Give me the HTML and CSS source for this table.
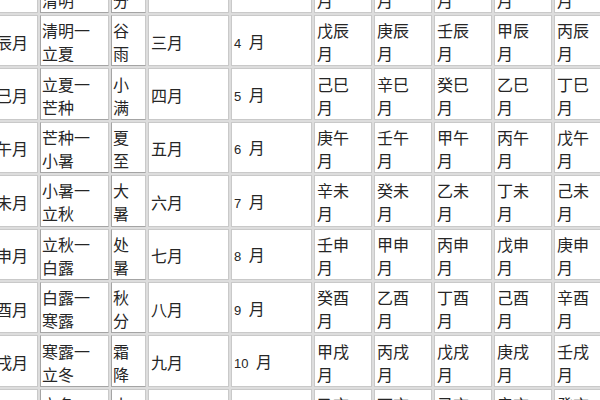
FILE: index.html
```html
<!DOCTYPE html>
<html lang="zh">
<head>
<meta charset="utf-8">
<title>月建表</title>
<link rel="stylesheet" href="styles.css">
</head>
<body>
<table class="grid">
<colgroup>
<col class="c1"><col class="c2"><col class="c3"><col class="c4"><col class="c5">
<col class="cg"><col class="cg"><col class="cg"><col class="cg"><col class="cg">
</colgroup>
<tbody>
<tr><td>卯月</td><td class="s">惊蛰一<br>清明</td><td class="s">春<br>分</td><td>二月</td><td><span class="n">3</span> 月</td><td>丁卯<br>月</td><td>己卯<br>月</td><td>辛卯<br>月</td><td>癸卯<br>月</td><td>乙卯<br>月</td></tr>
<tr><td>辰月</td><td class="s">清明一<br>立夏</td><td class="s">谷<br>雨</td><td>三月</td><td><span class="n">4</span> 月</td><td>戊辰<br>月</td><td>庚辰<br>月</td><td>壬辰<br>月</td><td>甲辰<br>月</td><td>丙辰<br>月</td></tr>
<tr><td>巳月</td><td class="s">立夏一<br>芒种</td><td class="s">小<br>满</td><td>四月</td><td><span class="n">5</span> 月</td><td>己巳<br>月</td><td>辛巳<br>月</td><td>癸巳<br>月</td><td>乙巳<br>月</td><td>丁巳<br>月</td></tr>
<tr><td>午月</td><td class="s">芒种一<br>小暑</td><td class="s">夏<br>至</td><td>五月</td><td><span class="n">6</span> 月</td><td>庚午<br>月</td><td>壬午<br>月</td><td>甲午<br>月</td><td>丙午<br>月</td><td>戊午<br>月</td></tr>
<tr><td>未月</td><td class="s">小暑一<br>立秋</td><td class="s">大<br>暑</td><td>六月</td><td><span class="n">7</span> 月</td><td>辛未<br>月</td><td>癸未<br>月</td><td>乙未<br>月</td><td>丁未<br>月</td><td>己未<br>月</td></tr>
<tr><td>申月</td><td class="s">立秋一<br>白露</td><td class="s">处<br>暑</td><td>七月</td><td><span class="n">8</span> 月</td><td>壬申<br>月</td><td>甲申<br>月</td><td>丙申<br>月</td><td>戊申<br>月</td><td>庚申<br>月</td></tr>
<tr><td>酉月</td><td class="s">白露一<br>寒露</td><td class="s">秋<br>分</td><td>八月</td><td><span class="n">9</span> 月</td><td>癸酉<br>月</td><td>乙酉<br>月</td><td>丁酉<br>月</td><td>己酉<br>月</td><td>辛酉<br>月</td></tr>
<tr><td>戌月</td><td class="s">寒露一<br>立冬</td><td class="s">霜<br>降</td><td>九月</td><td><span class="n">10</span> 月</td><td>甲戌<br>月</td><td>丙戌<br>月</td><td>戊戌<br>月</td><td>庚戌<br>月</td><td>壬戌<br>月</td></tr>
<tr><td>亥月</td><td class="s">立冬一<br>大雪</td><td class="s">小<br>雪</td><td>十月</td><td><span class="n">11</span> 月</td><td>乙亥<br>月</td><td>丁亥<br>月</td><td>己亥<br>月</td><td>辛亥<br>月</td><td>癸亥<br>月</td></tr>
</tbody>
</table>
</body>
</html>
```
FILE: styles.css
```css
html, body {
  margin: 0;
  padding: 0;
  overflow: hidden;
  background: #ffffff;
}
body {
  width: 600px;
  height: 400px;
  font-family: "Noto Sans CJK SC", "Liberation Sans", sans-serif;
  color: #262626;
}
.grid {
  table-layout: fixed;
  width: 623px;
  border-collapse: separate;
  border-spacing: 2px;
  background: #dddddd;
  margin: -40.4px 0 0 -9px;
  font-size: 16px;
  line-height: 23px;
}
.c1 { width: 45px; }
.c2 { width: 69px; }
.c3 { width: 35px; }
.c4 { width: 81px; }
.c5 { width: 81px; }
.cg { width: 58px; }
.grid td {
  box-sizing: border-box;
  height: 51.4px;
  padding: 3px 2px 0 2px;
  border: 1px solid #c9c9c9;
  background: #ffffff;
  vertical-align: middle;
  text-align: left;
  white-space: nowrap;
  overflow: hidden;
}
.grid td.s {
  padding-left: 1px;
  border-left-color: #a4a4a4;
  border-bottom-color: #a4a4a4;
}
.n {
  font-family: "Liberation Sans", sans-serif;
  font-size: 13px;
  margin-right: 4px;
}
```
